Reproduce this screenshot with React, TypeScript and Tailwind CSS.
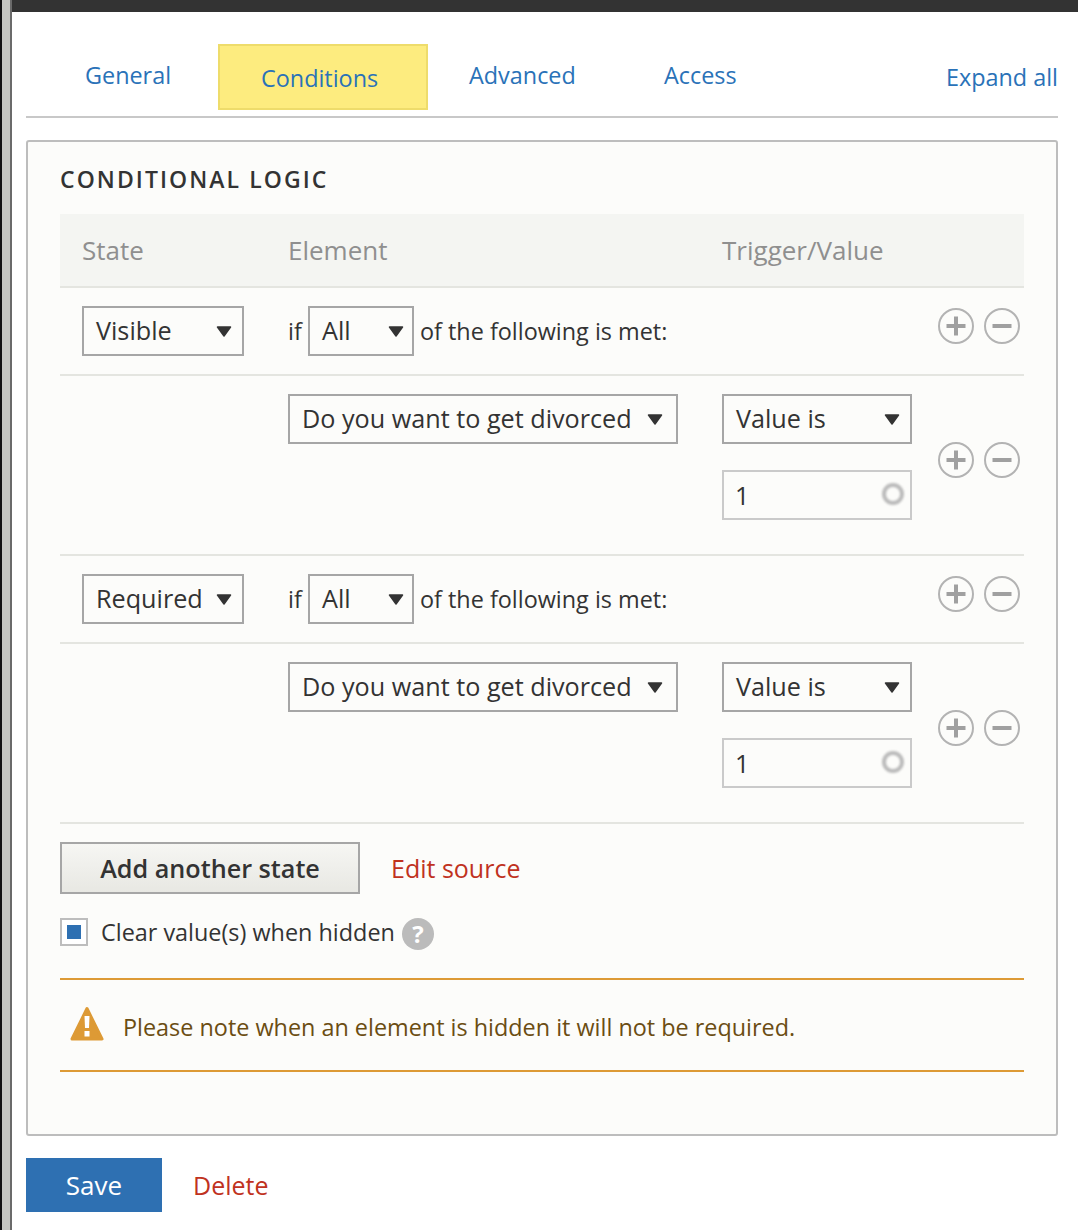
import type { ReactNode } from "react";

function Caret() {
  return (
    <svg width="16" height="11" viewBox="0 0 16 11" className="shrink-0">
      <path d="M1.500 1h13L8 10z" fill="#333" stroke="#333" strokeWidth="1.5" strokeLinejoin="round" />
    </svg>
  );
}

function Select({ label, className, caretGap = "" }: { label: string; className: string; caretGap?: string }) {
  return (
    <div className={`flex h-[50px] items-center justify-between border-2 border-[#a6a6a6] pl-3 pr-[10px] text-[25.2px] ${className}`}>
      <span className="pb-[2px]">{label}</span>
      <span className={`flex ${caretGap}`}>
        <Caret />
      </span>
    </div>
  );
}

function RoundButton({ minus }: { minus?: boolean }) {
  return (
    <svg width="36" height="36" viewBox="0 0 36 36">
      <circle cx="18" cy="18" r="17" fill="none" stroke="#b3b3b3" strokeWidth="2" />
      <path d={minus ? "M8.500 18h19" : "M8.500 18h19M18 8.500v19"} stroke="#a0a0a0" strokeWidth="4" />
    </svg>
  );
}

function Actions({ className }: { className: string }) {
  return (
    <div className={`flex gap-[10px] ${className}`}>
      <RoundButton />
      <RoundButton minus />
    </div>
  );
}

function Row({ children, actionsClass, height }: { children: ReactNode; actionsClass: string; height: string }) {
  return (
    <div className={`flex items-start border-b-2 border-[#e4e5e0] pt-[18px] ${height}`}>
      {children}
      <Actions className={actionsClass} />
    </div>
  );
}

function StateRow({ state }: { state: string }) {
  return (
    <Row height="h-[88px]" actionsClass="ml-auto mr-1 mt-[2px]">
      <div className="w-[228px] pl-[22px]">
        <Select label={state} className="w-[162px]" />
      </div>
      <div className="flex h-[50px] items-center">
        <span className="w-5">if</span>
        <Select label="All" className="w-[106px]" caretGap="-mr-[2px]" />
        <span className="ml-[6px]">of the following is met:</span>
      </div>
    </Row>
  );
}

function ConditionRow() {
  return (
    <Row height="h-[180px]" actionsClass="ml-auto mr-1 mt-[48px]">
      <div className="ml-[228px] w-[434px]">
        <Select label="Do you want to get divorced" className="w-[390px]" caretGap="mr-[3px]" />
      </div>
      <div className="flex w-[190px] flex-col gap-[26px]">
        <Select label="Value is" className="w-[190px]" />
        <div className="flex h-[50px] items-center justify-between border-2 border-[#cacaca] pl-[11px] pr-[6px] text-[25.2px]">
          <span>1</span>
          <div className="mb-[3px] h-[22px] w-[22px] rounded-full border-4 border-[#bbb] blur-[0.8px]" />
        </div>
      </div>
    </Row>
  );
}

export default function App() {
  return (
    <div className="flex h-[1230px] w-[1078px] overflow-hidden bg-white font-['Open_Sans',sans-serif] text-[23.4px] leading-[34px] text-[#333]">
      <div className="w-[2px] bg-[#111]" />
      <div className="w-[8px] bg-[#c4c5c0]" />
      <div className="w-[2px] bg-[#6b6b6b]" />
      <div className="flex-1">
        <div className="h-3 bg-[#333]" />
        <div className="pl-[14px] pr-5">
          <div className="flex items-start border-b-2 border-[#c8c8c8] pb-[6px] pl-[59px] pt-8 text-[#2a72b8]">
            <div className="flex h-[62px] w-[133px] items-center">General</div>
            <div className="flex h-[66px] w-[210px] items-center border-2 border-[#eedc6b] bg-[#fdec7f] pl-[41px] pt-[2px]">Conditions</div>
            <div className="box-content flex h-[62px] w-[154px] items-center pl-[41px]">Advanced</div>
            <div className="ml-[41px] flex h-[62px] items-center">Access</div>
            <div className="ml-auto flex h-[66px] items-center">Expand all</div>
          </div>

          <div className="mt-[22px] rounded-[3px] border-2 border-[#bdbdbd] bg-[#fcfcfa] px-8 pb-[62px] pt-[22px]">
            <h2 className="mb-5 h-[30px] text-[23px] font-semibold uppercase leading-[30px] tracking-[0.09em]">Conditional logic</h2>

            <div className="flex h-[74px] items-center border-b-2 border-[#e4e5e0] bg-[#f4f5f2] text-[26px] text-[#8f8f8f]">
              <div className="w-[228px] pl-[22px]">State</div>
              <div className="w-[434px]">Element</div>
              <div>Trigger/Value</div>
            </div>
            <StateRow state="Visible" />
            <ConditionRow />
            <StateRow state="Required" />
            <ConditionRow />

            <div className="mt-[18px] flex items-center">
              <button className="h-[52px] w-[300px] border-2 border-[#a6a6a6] bg-gradient-to-b from-[#f6f6f3] to-[#e8e8e3] text-[25.2px] font-[550]">Add another state</button>
              <a className="ml-[31px] text-[25px] text-[#c0321e]">Edit source</a>
            </div>

            <div className="mt-6 flex h-8 items-start">
              <div className="flex h-7 w-7 items-center justify-center border-2 border-[#bdbdbd] bg-white">
                <div className="h-[14px] w-[14px] bg-[#2e70b2]" />
              </div>
              <span className="ml-[13px] leading-[28px]">Clear value(s) when hidden</span>
              <span className="ml-[7px] flex h-8 w-8 items-center justify-center rounded-full bg-[#bbb] text-[24px] font-bold text-white">?</span>
            </div>

            <div className="mt-7 flex h-[94px] items-center border-y-2 border-[#dd9a35] pl-[10px] text-[#6b4d12]">
              <svg width="34" height="36" viewBox="0 0 34 36" className="mb-[3px] shrink-0">
                <path d="M17 2.500 L32 33 H2 Z" fill="#dd9a35" stroke="#dd9a35" strokeWidth="3" strokeLinejoin="round" />
                <path d="M14.500 10h5l-.5 12h-4z" fill="#fff" />
                <rect x="14.500" y="25" width="5" height="5.500" fill="#fff" />
              </svg>
              <span className="ml-[19px] pt-1">Please note when an element is hidden it will not be required.</span>
            </div>
          </div>

          <div className="mt-[22px] flex items-center">
            <button className="h-[54px] w-[136px] bg-[#2e70b2] text-[26px] font-medium text-white">Save</button>
            <a className="ml-[31px] text-[25px] text-[#c0321e]">Delete</a>
          </div>
        </div>
      </div>
    </div>
  );
}
